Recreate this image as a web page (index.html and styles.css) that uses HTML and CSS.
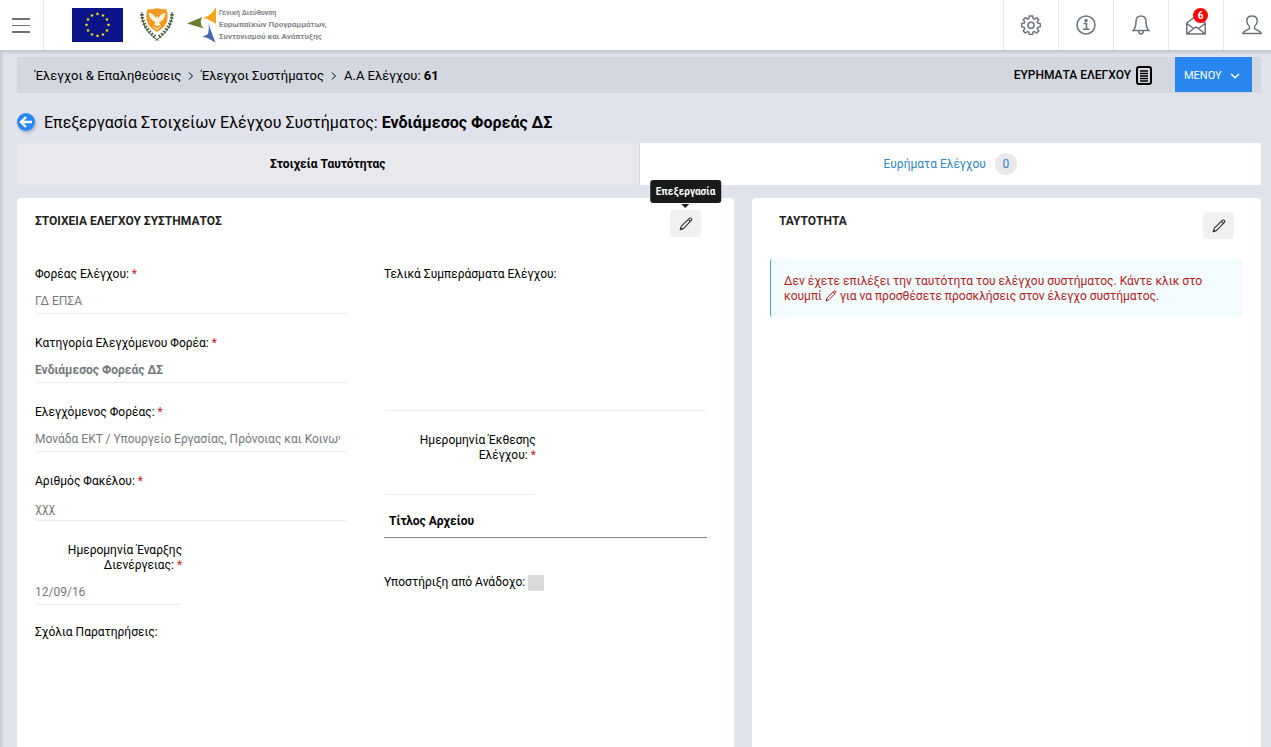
FILE: index.html
```html
<!DOCTYPE html>
<html lang="el">
<head>
<meta charset="utf-8">
<meta name="viewport" content="width=device-width, initial-scale=1">
<title>Επεξεργασία Στοιχείων Ελέγχου Συστήματος</title>
<link rel="stylesheet" href="styles.css">
</head>
<body>
<svg class="defs" aria-hidden="true">
  <symbol id="pencil" viewBox="0 0 16 16">
    <path d="M1.400 14.600l1.300-4.200L11.500 1.800c.8-.8 2-.9 2.600-.2.600.6.500 1.800-.2 2.500L5.300 13z" fill="none" stroke="currentColor" stroke-width="1.300" stroke-linejoin="round"/>
    <path d="M1 15l.9-2.900 1.900 2zM10.200 3.200l.9-.9 2.400 2.400-.9.9z" fill="currentColor"/>
  </symbol>
  <symbol id="star" viewBox="-5 -5 10 10">
    <path d="M0-5l1.200 3.400h3.600L1.900.6 3 4 0 1.900-3 4-1.900.6l-2.900-2.200h3.600z" fill="#fff200"/>
  </symbol>
</svg>

<header class="topbar">
  <button class="burger" aria-label="Μενού πλοήγησης"><span></span><span></span><span></span></button>
  <div class="brands">
    <svg class="flag" viewBox="0 0 51 34" aria-label="Ευρωπαϊκή Ένωση">
      <rect width="51" height="34" fill="#0d1489"/>
      <use href="#star" x="23.5" y="4" width="4" height="4"/><use href="#star" x="29" y="5.5" width="4" height="4"/>
      <use href="#star" x="33" y="9.500" width="4" height="4"/><use href="#star" x="34.500" y="15" width="4" height="4"/>
      <use href="#star" x="33" y="20.500" width="4" height="4"/><use href="#star" x="29" y="24.500" width="4" height="4"/>
      <use href="#star" x="23.500" y="26" width="4" height="4"/><use href="#star" x="18" y="24.500" width="4" height="4"/>
      <use href="#star" x="14" y="20.500" width="4" height="4"/><use href="#star" x="12.500" y="15" width="4" height="4"/>
      <use href="#star" x="14" y="9.500" width="4" height="4"/><use href="#star" x="18" y="5.500" width="4" height="4"/>
    </svg>
    <svg class="crest" viewBox="0 0 34 34" aria-label="Κυπριακή Δημοκρατία">
      <path d="M8 1c3 1 6-.8 9-.8S23 2 26 1c2 3 1.800 7 1.300 11C26.700 17 22 21 17 24 12 21 7.300 17 6.700 12 6.200 8 6 4 8 1z" fill="#f29a1f"/>
      <path d="M8.500 5c3.500 0 6 2 7.500 5l1-2 1.500 2C20 7 22 5 25.500 5c-.5 5-3 8-6.500 9.500l2 2.500-4 1-3-1 1.500-3C12 12.500 9 10 8.500 5z" fill="#fff2dc"/>
      <path d="M11 18l6 2 5-2-5 4z" fill="#fbd9a0"/>
      <g fill="none" stroke="#44583a">
        <path d="M2 4C1 14 6 25 18.500 32.500M32 4c1 10-4 21-16.500 28.500" stroke-width="1"/>
        <path d="M2 6c0 9 5 16 13 23M32 6c0 9-5 16-13 23" stroke-width="3.500" stroke-dasharray="1.500 1.700"/>
      </g>
    </svg>
    <div class="agency">
      <svg class="agency-mark" viewBox="0 0 30 36" aria-hidden="true">
        <path d="M29 0v17c-3-2-7-5-13-6C23 9 27 4 29 0z" fill="#f9a51a"/>
        <path d="M0 16.500L15.500 10c-1.500 2-2 4-1.500 6.500 0 2 1 3 3 5z" fill="#6b7d2c"/>
        <path d="M21.500 15c1 6 4.500 14 7 20.500-4-2-8-5.500-13-5.500l5.500-3c1-4 1-8 .5-12z" fill="#4467b2"/>
      </svg>
      <p class="agency-name"><small>Γενική Διεύθυνση</small>Ευρωπαϊκών Προγραμμάτων,<br>Συντονισμού και Ανάπτυξης</p>
    </div>
  </div>
  <nav class="tools" aria-label="Εργαλεία">
    <button aria-label="Ρυθμίσεις"><svg viewBox="0 0 20 20"><path d="M8.300 1h3.400l.5 2.500 1.300.600 2.200-1.500 2 2-1.400 2.200.6 1.400 2.500.5v3l-2.500.6-.6 1.300 1.500 2.200-2.200 2.200-2.200-1.500-1.300.6-.5 2.400H8.300l-.5-2.400-1.300-.6-2.200 1.500-2.100-2.200 1.500-2.200-.6-1.300-2.500-.6v-3l2.500-.5.6-1.400L2.300 4.600l2-2 2.200 1.500 1.300-.6z"/><circle cx="10" cy="10.200" r="3"/></svg></button>
    <button aria-label="Πληροφορίες"><svg viewBox="0 0 20 20"><circle cx="10" cy="10" r="9"/><path d="M7.500 8.500h3V14M7 14.300h6.500" stroke-width="1.600"/><circle cx="10" cy="5.500" r="1" fill="currentColor"/></svg></button>
    <button aria-label="Ειδοποιήσεις"><svg viewBox="0 0 20 20"><path d="M10 1C6.500 1 5 3.500 5 6.500c0 4-.5 6.500-2.800 9h15.600C15.500 13 15 10.500 15 6.500 15 3.500 13.500 1 10 1zM7.700 16c.2 4 4.400 4 4.600 0"/></svg></button>
    <button aria-label="Μηνύματα"><svg viewBox="0 0 20 20"><path d="M.8 8L10 1l9.200 7v11H.8zM1 8.500l6.500 5M19 8.500l-6.500 5M1 19l6.500-5.500L10 12l2.500 1.500L19 19"/></svg><span class="count">6</span></button>
    <button aria-label="Προφίλ"><svg viewBox="0 0 20 20"><path d="M10 1c-3.500 0-5.200 2-5.200 5 0 2.500 1.200 4.300 2.700 5.500v2.300c-1 .9-6 1.700-6.700 4.700h18.400c-.7-3-5.700-3.800-6.700-4.700v-2.300c1.500-1.200 2.700-3 2.700-5.500 0-3-1.700-5-5.200-5z"/></svg></button>
  </nav>
</header>

<main class="page">
  <div class="crumbbar">
    <nav class="crumbs" aria-label="Διαδρομή">
      <a href="#">Έλεγχοι &amp; Επαληθεύσεις</a>
      <svg viewBox="0 0 6 10"><path d="M1 1.500L4.500 5 1 8.500"/></svg>
      <a href="#">Έλεγχοι Συστήματος</a>
      <svg viewBox="0 0 6 10"><path d="M1 1.500L4.500 5 1 8.500"/></svg>
      <span>Α.Α Ελέγχου: <b>61</b></span>
    </nav>
    <a class="findings" href="#">ΕΥΡΗΜΑΤΑ ΕΛΕΓΧΟΥ
      <svg viewBox="0 0 16 19"><rect x="1" y="1" width="14" height="17" rx="2" fill="none" stroke="#000" stroke-width="2"/><path d="M4 5h8M4 7.500h8M4 10h8M4 12.500h8M4 15h8" stroke="#000" stroke-width="1.500"/></svg>
    </a>
    <button class="menu">ΜΕΝΟΥ <svg viewBox="0 0 10 6"><path d="M1 1l4 3.800L9 1"/></svg></button>
  </div>

  <h1 class="title">
    <a class="back" href="#" aria-label="Πίσω"><svg viewBox="0 0 18 18"><circle cx="9" cy="9" r="9" fill="#2886f0"/><path d="M15 9H4.500M9 4L4 9l5 5" fill="none" stroke="#fff" stroke-width="2.400"/></svg></a>
    <span>Επεξεργασία Στοιχείων Ελέγχου Συστήματος: <b>Ενδιάμεσος Φορεάς ΔΣ</b></span>
  </h1>

  <nav class="tabs" aria-label="Καρτέλες">
    <a class="tab active" href="#">Στοιχεία Ταυτότητας</a>
    <a class="tab" href="#">Ευρήματα Ελέγχου <span class="pill">0</span></a>
  </nav>

  <div class="panels">
    <section class="panel panel-main">
      <div class="panel-head">
        <h2>ΣΤΟΙΧΕΙΑ ΕΛΕΓΧΟΥ ΣΥΣΤΗΜΑΤΟΣ</h2>
        <button class="edit" aria-label="Επεξεργασία στοιχείων"><svg><use href="#pencil"/></svg><span class="tooltip">Επεξεργασία</span></button>
      </div>
      <form class="form">
        <div class="column">
          <div class="field"><label for="f1">Φορέας Ελέγχου: <i>*</i></label><input id="f1" value="ΓΔ ΕΠΣΑ" readonly></div>
          <div class="field"><label for="f2">Κατηγορία Ελεγχόμενου Φορέα: <i>*</i></label><input id="f2" class="strong" value="Ενδιάμεσος Φορεάς ΔΣ" readonly></div>
          <div class="field"><label for="f3">Ελεγχόμενος Φορέας: <i>*</i></label><input id="f3" value="Μονάδα ΕΚΤ / Υπουργείο Εργασίας, Πρόνοιας και Κοινωνικών Ασφαλίσεων" readonly></div>
          <div class="field"><label for="f4">Αριθμός Φακέλου: <i>*</i></label><input id="f4" value="χχχ" readonly></div>
          <div class="field date"><label for="f5">Ημερομηνία Έναρξης Διενέργειας: <i>*</i></label><input id="f5" value="12/09/16" readonly></div>
          <div class="field"><label for="f6">Σχόλια Παρατηρήσεις:</label><textarea id="f6" class="plain" readonly></textarea></div>
        </div>
        <div class="column">
          <div class="field"><label for="f7">Τελικά Συμπεράσματα Ελέγχου:</label><textarea id="f7" readonly></textarea></div>
          <div class="field date"><label for="f8">Ημερομηνία Έκθεσης Ελέγχου: <i>*</i></label><input id="f8" readonly></div>
          <table class="files"><thead><tr><th scope="col">Τίτλος Αρχείου</th></tr></thead></table>
          <div class="check"><label for="f9">Υποστήριξη από Ανάδοχο:</label><input id="f9" type="checkbox" disabled></div>
        </div>
      </form>
    </section>

    <section class="panel panel-side">
      <div class="panel-head">
        <h2>ΤΑΥΤΟΤΗΤΑ</h2>
        <button class="edit" aria-label="Επεξεργασία ταυτότητας"><svg><use href="#pencil"/></svg></button>
      </div>
      <p class="notice">Δεν έχετε επιλέξει την ταυτότητα του ελέγχου συστήματος. Κάντε κλικ στο κουμπί <svg><use href="#pencil"/></svg> για να προσθέσετε προσκλήσεις στον έλεγχο συστήματος.</p>
    </section>
  </div>
</main>
</body>
</html>
```

FILE: styles.css
```css
* { box-sizing: border-box; }

body {
  margin: 0;
  min-height: 100vh;
  display: flex;
  flex-direction: column;
  font: 12px/15px Roboto, "Noto Sans", sans-serif;
  color: #000;
  background: #e0e3eb;
}

button { font: inherit; border: 0; cursor: pointer; }
a { color: inherit; text-decoration: none; }
.defs { position: absolute; width: 0; height: 0; }

/* Top bar */
.topbar { display: flex; height: 50px; background: #fff; }

.burger {
  display: flex;
  flex-direction: column;
  justify-content: center;
  gap: 5px;
  width: 44px;
  padding: 0 13px 0 12px;
  background: none;
  border-right: 1px solid #e8e8e8;
}
.burger span { height: 2px; background: #6b747b; }
.burger span:nth-child(2) { height: 1px; }

.brands { display: flex; flex: 1; align-items: center; padding-left: 28px; }
.flag { width: 51px; height: 34px; margin-right: 17px; }
.crest { width: 34px; height: 34px; margin-right: 13px; }
.agency { display: flex; align-items: center; gap: 2px; }
.agency-mark { width: 30px; height: 36px; }
.agency-name { margin: 0; font-size: 8px; line-height: 12px; font-weight: 700; color: #85868a; white-space: nowrap; }
.agency-name small { display: block; font-size: 7px; }

.tools { display: flex; }
.tools button {
  position: relative;
  display: flex;
  align-items: center;
  justify-content: center;
  width: 55px;
  padding: 0;
  color: #6b747b;
  background: none;
  border-left: 1px solid #e8e8e8;
}
.tools button:last-child { width: 48px; padding-left: 8px; }
.tools svg { width: 20px; height: 20px; fill: none; stroke: currentColor; stroke-width: 1.5; }
.count {
  position: absolute;
  top: 8px;
  right: 15px;
  width: 15px;
  height: 15px;
  border-radius: 50%;
  background: #f00;
  color: #fff;
  font-size: 10px;
  font-weight: 700;
}

/* Page */
.page {
  flex: 1;
  display: flex;
  flex-direction: column;
  padding: 7px 10px 0 17px;
  box-shadow: inset 2px 3px 3px #c4c7ce;
}

.crumbbar { display: flex; align-items: center; height: 36px; padding: 0 9px 0 18px; background: #d3d7df; }
.crumbs { display: flex; align-items: center; gap: 7px; flex: 1; font-size: 13px; line-height: 16px; padding-top: 2px; }
.crumbs svg { width: 6px; height: 10px; fill: none; stroke: #000; }
.findings { display: flex; align-items: center; gap: 5px; font-weight: 500; margin-right: 23px; }
.findings svg { width: 16px; height: 19px; }
.menu {
  display: flex;
  align-items: center;
  gap: 8px;
  align-self: flex-start;
  height: 35px;
  width: 77px;
  padding: 2px 9px 0;
  color: #fff;
  background: #2886f0;
  font-size: 11px;
}
.menu svg { width: 10px; height: 6px; fill: none; stroke: #fff; stroke-width: 1.5; }

.title { display: flex; align-items: center; gap: 9px; margin: 18px 0 10px; font-size: 16px; line-height: 22px; font-weight: 400; }
.title span { padding-top: 1px; line-height: 21px; }
.back { display: flex; border-radius: 50%; box-shadow: 1px 2px 3px #a9b2c4; }
.back svg { width: 18px; height: 18px; }

.tabs { display: flex; height: 42px; background: #fff; }
.tab { flex: 1; display: flex; align-items: center; justify-content: center; gap: 9px; color: #3186c5; }
.tab.active { background: #e8e8ed; border-right: 1px solid #d6d6de; color: #000; font-weight: 700; }
.pill { width: 22px; line-height: 22px; border-radius: 50%; background: #e8e8ed; text-align: center; }

/* Panels */
.panels { flex: 1; display: grid; grid-template-columns: 717fr 509fr; gap: 18px; margin-top: 13px; }
.panel { min-width: 0; background: #fff; border-radius: 4px 4px 0 0; }
.panel-main { padding: 12px 27px 0 18px; }
.panel-side { padding: 14px 18px 0; }

.panel-head { display: flex; justify-content: space-between; align-items: flex-start; }
.panel-head h2 { margin: 4px 0 0; font-size: 12px; line-height: 15px; font-weight: 700; color: #222; }
.panel-main .panel-head { padding-right: 6px; }
.panel-side .panel-head { padding: 0 9px; }
.panel-side .panel-head h2 { margin-top: 2px; }
.edit {
  position: relative;
  display: flex;
  align-items: center;
  justify-content: center;
  width: 31px;
  height: 27px;
  padding: 0;
  border-radius: 3px;
  background: #f1f1f1;
  color: #333;
}
.edit svg { width: 14px; height: 14px; }

.tooltip {
  position: absolute;
  left: 50%;
  bottom: 34px;
  transform: translateX(-50%);
  padding: 1px 6px 0;
  line-height: 22px;
  border-radius: 3px;
  background: #1a1a1a;
  color: #fff;
  font-size: 10px;
  font-weight: 700;
}
.tooltip::after {
  content: "";
  position: absolute;
  left: 50%;
  top: 24px;
  margin-left: -4px;
  border: 4px solid transparent;
  border-top-color: #1a1a1a;
  border-bottom: 0;
}

.form { display: grid; grid-template-columns: 313fr 323fr; gap: 36px; margin-top: 30px; }
.column { min-width: 0; }
.field { display: flex; flex-direction: column; margin-bottom: 22px; }
.field i { color: #c9211e; font-style: normal; }
.field input,
.field textarea {
  width: 100%;
  height: 27px;
  margin-top: 5px;
  padding: 1px 8px 0 0;
  border: 0;
  border-bottom: 1px solid #ececec;
  border-radius: 3px;
  background: none;
  color: #74787c;
  font: inherit;
  outline: 0;
  resize: none;
}
.field textarea { height: 124px; }
.field textarea.plain { height: 80px; border: 0; }
.field .strong { font-weight: 700; }
.date { width: 47%; margin-bottom: 20px; }
.date label { text-align: right; }

.files { width: 100%; margin-top: -9px; border-collapse: collapse; }
.files th { height: 31px; padding: 1px 5px 0; border-bottom: 1px solid #7d8184; text-align: left; font-weight: 700; }
.check { display: flex; align-items: center; gap: 3px; margin-top: 37px; }
.check input { appearance: none; width: 16px; height: 16px; margin: 0; background: #d9d9d9; }

.notice {
  margin: 20px 0 0;
  padding: 15px 40px 13px 13px;
  border-left: 1px solid #3bafda;
  border-radius: 3px;
  background: #f2fbfe;
  color: #b0221b;
}
.notice svg { width: 12px; height: 12px; vertical-align: -2px; }
```
